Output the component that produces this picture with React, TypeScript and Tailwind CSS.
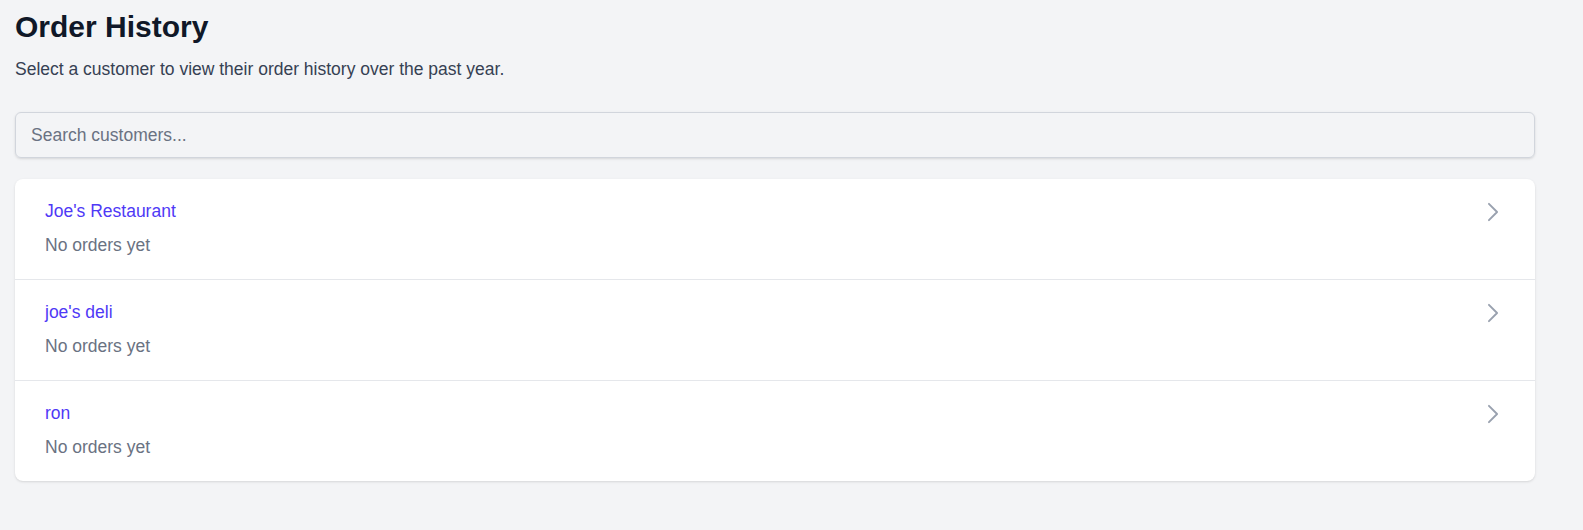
const customers = [
	{ id: 1, name: "Joe's Restaurant" },
	{ id: 2, name: "joe's deli" },
	{ id: 3, name: 'ron' },
];

function ChevronRight() {
	return (
		<svg
			xmlns="http://www.w3.org/2000/svg"
			viewBox="0 0 24 24"
			fill="none"
			stroke="currentColor"
			strokeWidth={1.75}
			className="h-[26px] w-[26px] mt-[1px] shrink-0 text-gray-400"
		>
			<path strokeLinecap="round" strokeLinejoin="round" d="m8.25 4.5 7.5 7.5-7.5 7.5" />
		</svg>
	);
}

export default function App() {
	return (
		<div className="min-h-screen bg-gray-100 pt-[9px] px-[15px] font-['Liberation_Sans',Arial,sans-serif]">
			<div className="w-[1520px]">
				<h1 className="text-[30px] leading-[36px] font-bold text-gray-900">Order History</h1>
				<p className="mt-[11px] text-[17.5px] leading-[26px] text-gray-700">
					Select a customer to view their order history over the past year.
				</p>

				<input
					type="text"
					placeholder="Search customers..."
					className="mt-[30px] block w-full h-[46px] px-[15px] rounded-md border border-gray-300 bg-transparent shadow-sm text-[17.5px] text-gray-900 placeholder:text-gray-500 outline-none"
				/>

				<ul className="mt-[21px] bg-white rounded-lg shadow-sm divide-y divide-gray-200">
					{customers.map((customer) => (
						<li key={customer.id} className="flex items-start justify-between pl-[30px] pr-[29px] pt-[19px] pb-[21px]">
							<div>
								<div className="text-[17.5px] leading-[26px] text-indigo-600">{customer.name}</div>
								<div className="mt-[8px] text-[17.5px] leading-[26px] text-gray-500">No orders yet</div>
							</div>
							<ChevronRight />
						</li>
					))}
				</ul>
			</div>
		</div>
	);
}
